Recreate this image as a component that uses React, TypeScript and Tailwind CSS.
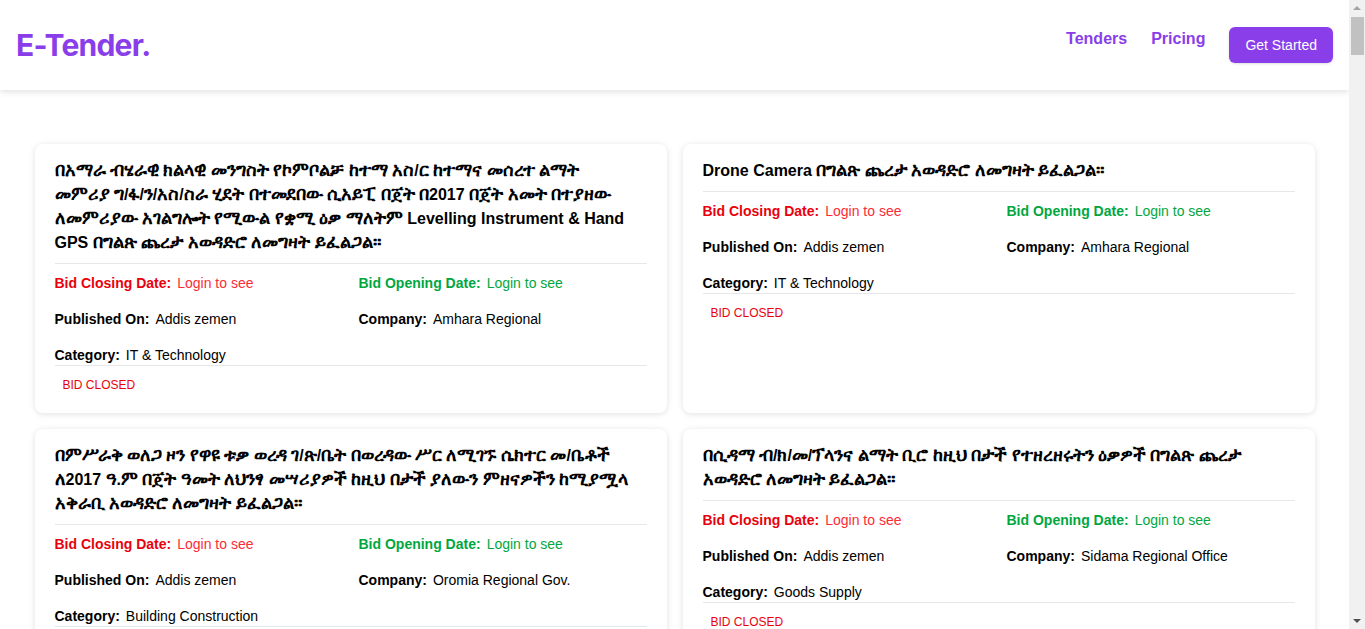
const tenders = [
  {
    title:
      "በአማራ ብሄራዊ ክልላዊ መንግስት የኮምቦልቻ ከተማ አስ/ር ከተማና መሰረተ ልማት\nመምሪያ ግ/ፋ/ን/አስ/ስራ ሂደት በተመደበው ሲአይፒ በጀት በ2017 በጀት አመት በተያዘው ለመምሪያው አገልግሎት የሚውል የቋሚ ዕቃ ማለትም Levelling Instrument & Hand GPS በግልጽ ጨረታ አወዳድሮ ለመግዛት ይፈልጋል።",
    company: "Amhara Regional",
    category: "IT & Technology",
  },
  {
    title: "Drone Camera በግልጽ ጨረታ አወዳድሮ ለመግዛት ይፈልጋል።",
    company: "Amhara Regional",
    category: "IT & Technology",
  },
  {
    title:
      "በምሥራቅ ወለጋ ዞን የዋዩ ቱቃ ወረዳ ገ/ጽ/ቤት በወረዳው ሥር ለሚገኙ ሴክተር መ/ቤቶች ለ2017 ዓ.ም በጀት ዓመት ለህንፃ መሣሪያዎች ከዚህ በታች ያለውን ምዘናዎችን ከሚያሟላ አቅራቢ አወዳድሮ ለመግዛት ይፈልጋል።",
    company: "Oromia Regional Gov.",
    category: "Building Construction",
  },
  {
    title:
      "በሲዳማ ብ/ክ/መ/ፕላንና ልማት ቢሮ ከዚህ በታች የተዘረዘሩትን ዕቃዎች በግልጽ ጨረታ አወዳድሮ ለመግዛት ይፈልጋል።",
    company: "Sidama Regional Office",
    category: "Goods Supply",
  },
];

// the Ethiopic fallback font runs small next to Arial, so bump those runs up a bit
const Title = ({ text }: { text: string }) => {
  const parts = text.split(/([\u1200-\u139F\u2D80-\u2DDF]+)/);
  return (
    <>
      {parts.map((p, i) =>
        /[\u1200-\u139F]/.test(p) ? (
          <span key={i} className="text-[18px] leading-4 [word-spacing:1.4px]">{p}</span>
        ) : (
          <span key={i}>{p}</span>
        )
      )}
    </>
  );
};

const TenderCard = ({ t }: { t: (typeof tenders)[number] }) => (
  <div className="bg-white rounded-lg shadow-[0_1px_6px_rgba(0,0,0,0.12)] px-5 pt-[15px] pb-5 flex flex-col">
    <h3 className="whitespace-pre-line text-base leading-6 font-bold text-black pb-2 border-b border-gray-200">
      <Title text={t.title} />
    </h3>
    <div className="grid grid-cols-2 gap-x-4 gap-y-4 pt-[9px] text-sm leading-5 border-b border-gray-200">
      <div>
        <span className="font-bold text-red-600">Bid Closing Date:</span>
        <span className="ml-1.5 text-red-500">Login to see</span>
      </div>
      <div>
        <span className="font-bold text-green-600">Bid Opening Date:</span>
        <span className="ml-1.5 text-green-600">Login to see</span>
      </div>
      <div>
        <span className="font-bold text-black">Published On:</span>
        <span className="ml-1.5 text-black">Addis zemen</span>
      </div>
      <div>
        <span className="font-bold text-black">Company:</span>
        <span className="ml-1.5 text-black">{t.company}</span>
      </div>
      <div>
        <span className="font-bold text-black">Category:</span>
        <span className="ml-1.5 text-black">{t.category}</span>
      </div>
    </div>
    <div className="pt-[11px] text-xs leading-4">
      <span className="px-2 text-red-600 uppercase">Bid Closed</span>
    </div>
  </div>
);

const App = () => {
  return (
    <div className="min-h-screen bg-white font-['Liberation_Sans',Arial,sans-serif]">
      <div className="mr-4">
        {/* Header */}
        <header className="h-[90px] bg-white shadow-[0_2px_6px_rgba(0,0,0,0.12)] px-4 flex items-center justify-between">
          <h1 className="font-['Inter',sans-serif] text-3xl font-bold text-[#893ee9] tracking-tight">
            E-Tender.
          </h1>
          <nav className="flex items-center gap-6">
            <a href="#" className="pb-3 text-base font-bold text-[#893ee9]">Tenders</a>
            <a href="#" className="pb-3 text-base font-bold text-[#893ee9]">Pricing</a>
            <button className="px-4 py-2 text-sm leading-5 text-white bg-[#893ee9] rounded-md shadow-sm">
              Get Started
            </button>
          </nav>
        </header>

        {/* Tender list */}
        <main className="max-w-7xl mx-auto pt-[54px] pb-12">
          <div className="grid grid-cols-2 gap-4">
            {tenders.map((t, i) => (
              <TenderCard key={i} t={t} />
            ))}
          </div>
        </main>
      </div>

      {/* scrollbar strip */}
      <div className="fixed top-0 right-0 h-screen w-4 bg-[#f1f1f1] flex flex-col items-center">
        <div className="mt-[6px] w-0 h-0 border-x-[4px] border-x-transparent border-b-[4px] border-b-[#a3a3a3]" />
        <div className="mt-[7px] w-[13px] h-[38px] bg-[#c1c1c1]" />
        <div className="flex-1" />
        <div className="mb-[6px] w-0 h-0 border-x-[4px] border-x-transparent border-t-[4px] border-t-[#505050]" />
      </div>
    </div>
  );
};

export default App;
